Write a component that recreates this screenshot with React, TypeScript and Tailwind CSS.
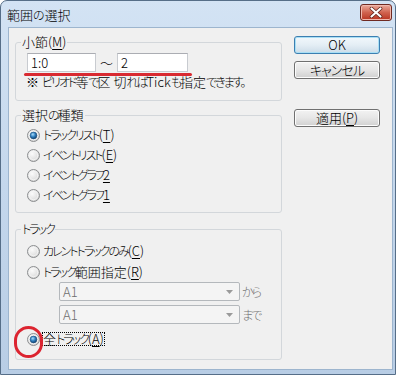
import React from "react";

function J({ t }: { t: string }) {
  const parts = t.match(/[\u3000-\u30ff]+|[^\u3000-\u30ff]+/g) ?? [];
  return (
    <>
      {parts.map((p, i) =>
        /[\u3000-\u30ff]/.test(p) ? (
          <span key={i} className="text-[12px] tracking-[-2px]">
            {p}
          </span>
        ) : (
          <span key={i}>{p}</span>
        )
      )}
    </>
  );
}

function Radio({ checked }: { checked?: boolean }) {
  return (
    <svg width="13" height="13" viewBox="0 0 13 13" className="shrink-0">
      <defs>
        <radialGradient id="rbg" cx="0.38" cy="0.35" r="0.75">
          <stop offset="0" stopColor="#fbfbfb" />
          <stop offset="0.6" stopColor="#e3e3e3" />
          <stop offset="1" stopColor="#c9c9c9" />
        </radialGradient>
        <radialGradient id="rdot" cx="0.4" cy="0.35" r="0.7">
          <stop offset="0" stopColor="#a9dcfa" />
          <stop offset="0.5" stopColor="#2e7fc0" />
          <stop offset="1" stopColor="#0d3a66" />
        </radialGradient>
      </defs>
      <circle cx="6.5" cy="6.5" r="6" fill="url(#rbg)" stroke="#8c8e90" strokeWidth="1" />
      <circle cx="6.5" cy="6.5" r="4.2" fill="none" stroke="#f6f6f6" strokeWidth="0.8" />
      {checked && <circle cx="6.5" cy="6.5" r="3.4" fill="url(#rdot)" stroke="#1b4f7e" strokeWidth="0.6" />}
    </svg>
  );
}

function RadioRow({ children, checked, className }: { children: React.ReactNode; checked?: boolean; className?: string }) {
  return (
    <div className={"flex items-center h-[20px] pl-[11px] gap-[3px] " + (className ?? "")}>
      <Radio checked={checked} />
      <span className="leading-[16px] whitespace-nowrap">{children}</span>
    </div>
  );
}

function U({ children }: { children: React.ReactNode }) {
  return <span className="underline underline-offset-[2px] decoration-[1px]">{children}</span>;
}

function Combo({ label }: { label: string }) {
  return (
    <div className="flex items-center">
      <div className="ml-[43px] w-[181px] h-[19px] border border-[#b4b8bc] rounded-[2px] bg-[#f4f4f4] flex items-center pl-[3px] pr-[6px]">
        <span className="flex-1 text-[#6d6d6d] leading-[16px]">A1</span>
        <svg width="7" height="4" viewBox="0 0 7 4">
          <path d="M0 0 H7 L3.5 4 Z" fill="#9a9a9a" />
        </svg>
      </div>
      <span className="ml-[2px] text-[#707070] leading-[16px]">
        <J t={label} />
      </span>
    </div>
  );
}

function Button({ children, def, className }: { children: React.ReactNode; def?: boolean; className?: string }) {
  return (
    <div
      className={
        "relative h-[18px] w-[86px] rounded-[3px] border flex items-center justify-center leading-[16px] " +
        (def
          ? "border-[#3c7fb1] bg-linear-to-b from-[#f2f8fc] via-[#e4eef5] to-[#ccdce8] shadow-[inset_0_0_0_1px_#a9dff5] "
          : "border-[#707070] bg-linear-to-b from-[#f3f3f3] via-[#e6e6e6] to-[#d0d0d0] shadow-[inset_0_0_0_1px_#fcfcfc] ") +
        (className ?? "")
      }
    >
      {children}
    </div>
  );
}

export default function App() {
  return (
    <div className="relative w-[396px] h-[375px] overflow-hidden font-['Noto_Sans_CJK_JP','Liberation_Sans',sans-serif] font-light [font-feature-settings:'palt'] text-[13px] text-black bg-white">
      <div className="relative w-[396px] h-[375px] flex flex-col border border-[#566e88] rounded-t-[7px] bg-linear-to-b from-[#d3e3f4] via-[#c4d7ec] to-[#b8cde5]">
        {/* title bar */}
        <div className="h-[26px] pl-[6px] pt-[6px] leading-[16px] text-[13px] text-black">
          範囲<span className="text-[12px]">の</span>選択
        </div>
        {/* close button */}
        <div className="absolute top-[3px] right-[3px] w-[32px] h-[17px] rounded-[3px] border border-[#6f2a22] bg-linear-to-b from-[#e9a99c] via-[#d0634f] to-[#b8321f] shadow-[inset_0_0_0_1px_#f0b8ad] flex items-center justify-center">
          <svg width="14" height="11" viewBox="0 0 14 11">
            <path d="M2.5 1.5 L11.5 9.5 M11.5 1.5 L2.5 9.5" stroke="#5a1d16" strokeWidth="3.6" strokeLinecap="round" />
            <path d="M2.5 1.5 L11.5 9.5 M11.5 1.5 L2.5 9.5" stroke="#ffffff" strokeWidth="2.2" strokeLinecap="round" />
          </svg>
        </div>

        {/* client */}
        <div className="ml-[7px] mr-[2px] h-[343px] border border-[#9db5ce] bg-[#f0f0f0] flex pl-[6px]">
          {/* left column */}
          <div className="w-[267px] flex flex-col pt-[6px]">
            {/* group 1 */}
            <fieldset className="h-[67px] border border-[#d3d7db] rounded-[3px] p-0">
              <legend className="ml-[5px] px-[1px] leading-[16px]">
                小節(<U>M</U>)
              </legend>
              <div className="flex flex-col">
                <div className="flex items-center mt-[3px] pl-[11px]">
                  <div className="w-[69px] h-[19px] border border-[#c8cbd0] border-t-[#abadb3] bg-white pl-[3px] leading-[17px]">1:0</div>
                  <span className="w-[21px] text-center leading-[16px]">〜</span>
                  <div className="w-[71px] h-[19px] border border-[#c8cbd0] border-t-[#abadb3] bg-white pl-[3px] leading-[17px]">2</div>
                </div>
                <div className="mt-[2px] ml-[10px] leading-[16px] whitespace-nowrap">
                  ※ <J t="ピリオド" />等<J t="で" />区 切<J t="れば" />Tick<J t="も" />指定<J t="できます。" />
                </div>
              </div>
            </fieldset>

            {/* group 2 */}
            <fieldset className="mt-[6px] h-[106px] border border-[#d3d7db] rounded-[3px] p-0">
              <legend className="ml-[5px] px-[1px] leading-[16px]">
                選択<J t="の" />種類
              </legend>
              <div className="flex flex-col mt-[2px]">
                <RadioRow checked>
                  <J t="トラックリスト" />(<U>T</U>)
                </RadioRow>
                <RadioRow>
                  <J t="イベントリスト" />(<U>E</U>)
                </RadioRow>
                <RadioRow>
                  <J t="イベントグラフ" />
                  <U>2</U>
                </RadioRow>
                <RadioRow>
                  <J t="イベントグラフ" />
                  <U>1</U>
                </RadioRow>
              </div>
            </fieldset>

            {/* group 3 */}
            <fieldset className="mt-[8px] h-[139px] border border-[#d3d7db] rounded-[3px] p-0">
              <legend className="ml-[5px] px-[1px] leading-[16px]">
                <J t="トラック" />
              </legend>
              <div className="flex flex-col mt-[4px]">
                <RadioRow>
                  <J t="カレントトラックのみ" />(<U>C</U>)
                </RadioRow>
                <RadioRow className="mt-[1px]">
                  <J t="トラック" />範囲指定(<U>R</U>)
                </RadioRow>
                <Combo label="から" />
                <div className="mt-[4px]">
                  <Combo label="まで" />
                </div>
                <div className="flex items-center h-[20px] pl-[11px] gap-[2px] mt-[5px]">
                  <Radio checked />
                  <span className="border border-dotted border-black leading-[12px] whitespace-nowrap">
                    全<J t="トラック" />(<U>A</U>)
                  </span>
                </div>
              </div>
            </fieldset>
          </div>

          {/* right column */}
          <div className="ml-[12px] flex flex-col pt-[8px]">
            <Button def>OK</Button>
            <Button className="mt-[7px]">
              <span className="tracking-[-1px]">キャンセル</span>
            </Button>
            <Button className="mt-[30px]">
              適用(<U>P</U>)
            </Button>
          </div>
        </div>
      </div>

      {/* annotations */}
      <div className="absolute left-[24px] top-[73px] w-[168px] h-[2.5px] rounded-full bg-[#d92a31]" />
      <div className="absolute left-[14px] top-[326px] w-[29px] h-[32px] rounded-full border-[3px] border-[#dc2430]" />
    </div>
  );
}
